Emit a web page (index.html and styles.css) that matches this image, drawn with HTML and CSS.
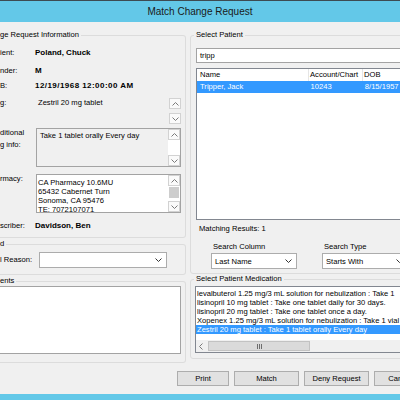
FILE: index.html
```html
<!DOCTYPE html>
<html>
<head>
    <link rel="stylesheet" href="styles.css">
</head>
<body>
<div class="window">
    <div class="titlebar">Match Change Request</div>
    <div class="client">
        <div class="columns">
            <div class="left">
                <fieldset class="group g-info">
                    <legend>ge Request Information</legend>
                    <div class="row r-patient"><span class="lbl">ient:</span><b>Poland, Chuck</b></div>
                    <div class="row r-gender"><span class="lbl">nder:</span><b>M</b></div>
                    <div class="row r-dob"><span class="lbl">B:</span><b class="wide">12/19/1968 12:00:00 AM</b></div>
                    <div class="row r-drug">
                        <span class="lbl">g:</span>
                        <div class="plain">Zestril 20 mg tablet</div>
                        <div class="vscroll">
                            <div class="sbtn"><svg width="7" height="4"><path d="M0.5 3.5 L3.5 0.5 L6.5 3.5" fill="none" stroke="#7a7a7a"/></svg></div>
                            <div class="sbtn"><svg width="7" height="4"><path d="M0.5 0.5 L3.5 3.5 L6.5 0.5" fill="none" stroke="#7a7a7a"/></svg></div>
                        </div>
                    </div>
                    <div class="row r-addl">
                        <span class="lbl">ditional<br>g info:</span>
                        <div class="box readonly">
                            <div class="box-text">Take 1 tablet orally Every day</div>
                            <div class="vscroll">
                                <div class="sbtn"><svg width="7" height="4"><path d="M0.5 3.5 L3.5 0.5 L6.5 3.5" fill="none" stroke="#7a7a7a"/></svg></div>
                                <div class="track"></div>
                                <div class="sbtn"><svg width="7" height="4"><path d="M0.5 0.5 L3.5 3.5 L6.5 0.5" fill="none" stroke="#7a7a7a"/></svg></div>
                            </div>
                        </div>
                    </div>
                    <div class="row r-pharm">
                        <span class="lbl">rmacy:</span>
                        <div class="box">
                            <div class="box-text lines">CA Pharmacy 10.6MU<br>65432 Cabernet Turn<br>Sonoma, CA 95476<br>TE: 7072107071</div>
                            <div class="vscroll">
                                <div class="sbtn"><svg width="7" height="4"><path d="M0.5 3.5 L3.5 0.5 L6.5 3.5" fill="none" stroke="#7a7a7a"/></svg></div>
                                <div class="thumb"></div>
                                <div class="track"></div>
                                <div class="sbtn"><svg width="7" height="4"><path d="M0.5 0.5 L3.5 3.5 L6.5 0.5" fill="none" stroke="#7a7a7a"/></svg></div>
                            </div>
                        </div>
                    </div>
                    <div class="row r-presc"><span class="lbl">scriber:</span><b>Davidson, Ben</b></div>
                </fieldset>

                <fieldset class="group g-denied">
                    <legend>d</legend>
                    <div class="row r-reason">
                        <span class="lbl">l Reason:</span>
                        <div class="select reason-select">
                            <span></span>
                            <svg width="7" height="4"><path d="M0.5 0.5 L3.5 3.5 L6.5 0.5" fill="none" stroke="#333"/></svg>
                        </div>
                    </div>
                </fieldset>

                <fieldset class="group g-comments">
                    <legend>ents</legend>
                    <div class="comments"></div>
                </fieldset>
            </div>

            <div class="right">
                <fieldset class="group g-patient">
                    <legend>Select Patient</legend>
                    <div class="textbox">tripp</div>
                    <div class="listview">
                        <div class="lv-head">
                            <div class="c-name">Name</div>
                            <div class="c-acct">Account/Chart</div>
                            <div class="c-dob">DOB</div>
                        </div>
                        <div class="lv-row selected">
                            <div class="c-name">Tripper, Jack</div>
                            <div class="c-acct">10243</div>
                            <div class="c-dob">8/15/1957</div>
                        </div>
                    </div>
                    <div class="matching">Matching Results: 1</div>
                    <div class="search-row">
                        <div class="search-field">
                            <div class="search-lbl">Search Column</div>
                            <div class="select">
                                <span>Last Name</span>
                                <svg width="7" height="4"><path d="M0.5 0.5 L3.5 3.5 L6.5 0.5" fill="none" stroke="#333"/></svg>
                            </div>
                        </div>
                        <div class="search-field">
                            <div class="search-lbl">Search Type</div>
                            <div class="select">
                                <span>Starts With</span>
                                <svg width="7" height="4"><path d="M0.5 0.5 L3.5 3.5 L6.5 0.5" fill="none" stroke="#333"/></svg>
                            </div>
                        </div>
                    </div>
                </fieldset>

                <fieldset class="group g-meds">
                    <legend>Select Patient Medication</legend>
                    <div class="listbox">
                        <div class="items">
                            <div class="item">levalbuterol 1.25 mg/3 mL solution for nebulization : Take 1</div>
                            <div class="item">lisinopril 10 mg tablet : Take one tablet daily for 30 days.</div>
                            <div class="item">lisinopril 20 mg tablet : Take one tablet once a day.</div>
                            <div class="item">Xopenex 1.25 mg/3 mL solution for nebulization : Take 1 vial</div>
                            <div class="item selected">Zestril 20 mg tablet : Take 1 tablet orally Every day</div>
                        </div>
                        <div class="hscroll">
                            <div class="hbtn"><svg width="4" height="7"><path d="M3.5 0.5 L0.5 3.5 L3.5 6.5" fill="none" stroke="#7a7a7a"/></svg></div>
                            <div class="hthumb"><span></span><span></span><span></span></div>
                        </div>
                    </div>
                </fieldset>
            </div>
        </div>

        <div class="buttons">
            <button class="btn b-print">Print</button>
            <button class="btn b-match">Match</button>
            <button class="btn b-deny">Deny Request</button>
            <button class="btn b-cancel">Cancel</button>
        </div>
    </div>
    <div class="frame-bottom"></div>
</div>
</body>
</html>
```

FILE: styles.css
```css
body {
    margin: 0;
    width: 400px;
    height: 400px;
    overflow: hidden;
    background-color: #f0f0f0;
    font-family: "Liberation Sans", Arial, sans-serif;
    font-size: 7.6px;
    color: #000;
}
b {
    font-size: 8px;
}
b.wide {
    letter-spacing: 0.45px;
}
.window {
    display: flex;
    flex-direction: column;
    height: 400px;
}
.titlebar {
    height: 21px;
    line-height: 21px;
    border-top: 1px solid #3d4b52;
    background-color: #63c8e8;
    text-align: center;
    font-size: 10px;
    color: #1a1a1a;
}
.client {
    flex: 1;
    padding-top: 8px;
}
.frame-bottom {
    height: 6px;
    background-color: #63c8e8;
}
.columns {
    display: flex;
    align-items: flex-start;
}
.left {
    width: 186px;
    flex: none;
}
.right {
    width: 240px;
    flex: none;
    margin-left: 4px;
}

/* group boxes */
fieldset.group {
    margin: 0;
    padding: 0 4px 7px 0;
    border: 1px solid #dcdcdc;
    border-left: none;
    border-radius: 0 3px 3px 0;
    min-width: 0;
}
legend {
    padding: 0 2px 0 0;
    line-height: 10px;
}
.right fieldset.group {
    border-left: 1px solid #dcdcdc;
    border-radius: 3px;
    padding: 0 4px 4px 5px;
}
.right legend {
    margin-left: -2px;
    padding: 0 2px;
}
.g-info {
    padding-bottom: 6px !important;
}
.g-denied {
    margin-top: 1px !important;
    padding-bottom: 6px !important;
}
.g-comments {
    margin-top: 1px !important;
    padding-bottom: 8px !important;
}
.g-meds {
    padding-bottom: 5px !important;
}

/* left info rows */
.row {
    display: flex;
    line-height: 10px;
}
.lbl {
    width: 35px;
    flex: none;
}
.r-patient { margin-top: 8px; }
.r-gender { margin-top: 8px; }
.r-dob { margin-top: 5px; }
.r-drug {
    margin-top: 7px;
    height: 26px;
}
.plain {
    flex: 1;
    padding-left: 3px;
}
.r-drug .vscroll {
    justify-content: space-between;
}
.r-addl { margin-top: 3px; }
.r-addl .lbl { line-height: 12px; }
.r-pharm { margin-top: 7px; }
.r-presc { margin-top: 8px; }

.box {
    width: 145px;
    height: 39px;
    margin-left: 1px;
    box-sizing: border-box;
    border: 1px solid #a3a3a3;
    background-color: #fff;
    display: flex;
    overflow: hidden;
}
.box.readonly {
    margin-top: 1px;
    background-color: #f0f0f0;
}
.box-text {
    flex: 1;
    padding: 2px 0 0 3px;
    line-height: 10px;
    white-space: nowrap;
}
.box-text.lines {
    padding: 3px 0 0 1px;
    line-height: 9px;
}

/* scrollbars */
.vscroll {
    width: 12px;
    flex: none;
    display: flex;
    flex-direction: column;
}
.sbtn {
    height: 11px;
    box-sizing: border-box;
    border: 1px solid #d2d2d2;
    background-color: #fafafa;
    display: flex;
    align-items: center;
    justify-content: center;
}
.track {
    flex: 1;
    background-color: #fff;
}
.thumb {
    height: 11px;
    margin: 1px 1px 0 1px;
    background-color: #cdcdcd;
}

/* combo boxes */
.r-reason {
    margin-top: 3px;
}
.r-reason .lbl {
    width: 39px;
    line-height: 16px;
}
.select {
    height: 16px;
    box-sizing: border-box;
    border: 1px solid #acacac;
    background-color: #fff;
    display: flex;
    align-items: center;
    justify-content: space-between;
    padding: 0 4px 0 3px;
}
.reason-select {
    width: 128px;
}

.comments {
    width: 181px;
    height: 68px;
    box-sizing: border-box;
    border: 1px solid #a3a3a3;
    border-left: none;
    background-color: #fff;
}

/* select patient */
.textbox {
    margin-top: 8px;
    height: 15px;
    box-sizing: border-box;
    border: 1px solid #a3a3a3;
    background-color: #fff;
    padding-left: 3px;
    line-height: 13px;
}
.listview {
    margin-top: 5px;
    height: 152px;
    box-sizing: border-box;
    border: 1px solid #828790;
    background-color: #fff;
    overflow: hidden;
}
.lv-head, .lv-row {
    display: flex;
    height: 12px;
    line-height: 12px;
    white-space: nowrap;
}
.lv-head div {
    border-right: 1px solid #e5e5e5;
}
.c-name {
    width: 114px;
    padding-left: 3px;
    box-sizing: border-box;
}
.c-acct {
    width: 55px;
    padding-left: 1px;
    box-sizing: border-box;
}
.c-dob {
    width: 60px;
    padding-left: 1px;
}
.lv-row.selected {
    background-color: #3399ff;
    color: #fff;
}
.matching {
    margin-top: 4px;
    padding-left: 3px;
    line-height: 10px;
}
.search-row {
    display: flex;
    gap: 25px;
    padding-left: 15px;
}
.search-field {
    width: 86px;
    flex: none;
}
.search-lbl {
    margin-top: 8px;
    padding-left: 2px;
    line-height: 10px;
}
.search-field .select {
    margin-top: 1px;
}

/* medication list */
.listbox {
    margin: 2px 0 0 -1px;
    height: 67px;
    box-sizing: border-box;
    border: 1px solid #828790;
    background-color: #fff;
    display: flex;
    flex-direction: column;
    overflow: hidden;
}
.items {
    padding-top: 2px;
}
.item {
    line-height: 9px;
    padding-left: 1px;
    white-space: nowrap;
}
.item.selected {
    background-color: #3399ff;
    color: #fff;
}
.hscroll {
    margin-top: auto;
    height: 12px;
    display: flex;
    background-color: #f0f0f0;
}
.hbtn {
    width: 10px;
    display: flex;
    align-items: center;
    justify-content: center;
}
.hthumb {
    width: 102px;
    margin: 1px 0 1px 2px;
    box-sizing: border-box;
    border: 1px solid #c2c2c2;
    background-color: #dadada;
    display: flex;
    align-items: center;
    justify-content: center;
    gap: 1px;
}
.hthumb span {
    width: 1px;
    height: 5px;
    background-color: #6d6d6d;
}

/* dialog buttons */
.buttons {
    display: flex;
    gap: 5px;
    padding-left: 177px;
    margin-top: 8px;
}
.btn {
    flex: none;
    height: 15px;
    padding: 0;
    box-sizing: border-box;
    border: 1px solid #adadad;
    border-radius: 0;
    background-color: #e1e1e1;
    font: inherit;
    line-height: 13px;
    color: #000;
    text-align: center;
}
.b-print { width: 52px; }
.b-match { width: 65px; }
.b-deny { width: 65px; }
.b-cancel { width: 52px; }
```
